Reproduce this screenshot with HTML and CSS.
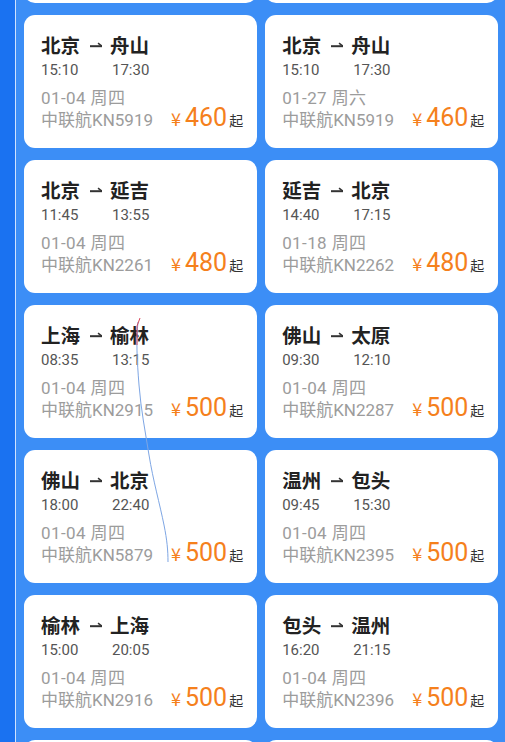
FILE: index.html
```html
<!DOCTYPE html>
<html lang="zh-CN">
<head>
<meta charset="utf-8">
<title>特价机票</title>
<link rel="stylesheet" href="styles.css">
</head>
<body>
<div class="page">
  <div class="strip"></div>
  <main class="main">
    <div class="grid">
      <div class="card"></div>
      <div class="card"></div>

      <div class="card">
        <div class="title"><span>北京</span><svg class="arrow" viewBox="0 0 12 8" width="12" height="8"><path d="M0 5.2H12" /><path d="M8 2.2L12 5.2" /></svg><span>舟山</span></div>
        <div class="times"><span class="dep">15:10</span><span>17:30</span></div>
        <div class="date">01-04 周四</div>
        <div class="bottom"><span class="airline">中联航KN5919</span><span class="price"><span class="yen">¥</span><span class="num">460</span><span class="qi">起</span></span></div>
      </div>
      <div class="card">
        <div class="title"><span>北京</span><svg class="arrow" viewBox="0 0 12 8" width="12" height="8"><path d="M0 5.2H12" /><path d="M8 2.2L12 5.2" /></svg><span>舟山</span></div>
        <div class="times"><span class="dep">15:10</span><span>17:30</span></div>
        <div class="date">01-27 周六</div>
        <div class="bottom"><span class="airline">中联航KN5919</span><span class="price"><span class="yen">¥</span><span class="num">460</span><span class="qi">起</span></span></div>
      </div>

      <div class="card">
        <div class="title"><span>北京</span><svg class="arrow" viewBox="0 0 12 8" width="12" height="8"><path d="M0 5.2H12" /><path d="M8 2.2L12 5.2" /></svg><span>延吉</span></div>
        <div class="times"><span class="dep">11:45</span><span>13:55</span></div>
        <div class="date">01-04 周四</div>
        <div class="bottom"><span class="airline">中联航KN2261</span><span class="price"><span class="yen">¥</span><span class="num">480</span><span class="qi">起</span></span></div>
      </div>
      <div class="card">
        <div class="title"><span>延吉</span><svg class="arrow" viewBox="0 0 12 8" width="12" height="8"><path d="M0 5.2H12" /><path d="M8 2.2L12 5.2" /></svg><span>北京</span></div>
        <div class="times"><span class="dep">14:40</span><span>17:15</span></div>
        <div class="date">01-18 周四</div>
        <div class="bottom"><span class="airline">中联航KN2262</span><span class="price"><span class="yen">¥</span><span class="num">480</span><span class="qi">起</span></span></div>
      </div>

      <div class="card">
        <div class="title"><span>上海</span><svg class="arrow" viewBox="0 0 12 8" width="12" height="8"><path d="M0 5.2H12" /><path d="M8 2.2L12 5.2" /></svg><span>榆林</span></div>
        <div class="times"><span class="dep">08:35</span><span>13:15</span></div>
        <div class="date">01-04 周四</div>
        <div class="bottom"><span class="airline">中联航KN2915</span><span class="price"><span class="yen">¥</span><span class="num">500</span><span class="qi">起</span></span></div>
      </div>
      <div class="card">
        <div class="title"><span>佛山</span><svg class="arrow" viewBox="0 0 12 8" width="12" height="8"><path d="M0 5.2H12" /><path d="M8 2.2L12 5.2" /></svg><span>太原</span></div>
        <div class="times"><span class="dep">09:30</span><span>12:10</span></div>
        <div class="date">01-04 周四</div>
        <div class="bottom"><span class="airline">中联航KN2287</span><span class="price"><span class="yen">¥</span><span class="num">500</span><span class="qi">起</span></span></div>
      </div>

      <div class="card">
        <div class="title"><span>佛山</span><svg class="arrow" viewBox="0 0 12 8" width="12" height="8"><path d="M0 5.2H12" /><path d="M8 2.2L12 5.2" /></svg><span>北京</span></div>
        <div class="times"><span class="dep">18:00</span><span>22:40</span></div>
        <div class="date">01-04 周四</div>
        <div class="bottom"><span class="airline">中联航KN5879</span><span class="price"><span class="yen">¥</span><span class="num">500</span><span class="qi">起</span></span></div>
      </div>
      <div class="card">
        <div class="title"><span>温州</span><svg class="arrow" viewBox="0 0 12 8" width="12" height="8"><path d="M0 5.2H12" /><path d="M8 2.2L12 5.2" /></svg><span>包头</span></div>
        <div class="times"><span class="dep">09:45</span><span>15:30</span></div>
        <div class="date">01-04 周四</div>
        <div class="bottom"><span class="airline">中联航KN2395</span><span class="price"><span class="yen">¥</span><span class="num">500</span><span class="qi">起</span></span></div>
      </div>

      <div class="card">
        <div class="title"><span>榆林</span><svg class="arrow" viewBox="0 0 12 8" width="12" height="8"><path d="M0 5.2H12" /><path d="M8 2.2L12 5.2" /></svg><span>上海</span></div>
        <div class="times"><span class="dep">15:00</span><span>20:05</span></div>
        <div class="date">01-04 周四</div>
        <div class="bottom"><span class="airline">中联航KN2916</span><span class="price"><span class="yen">¥</span><span class="num">500</span><span class="qi">起</span></span></div>
      </div>
      <div class="card">
        <div class="title"><span>包头</span><svg class="arrow" viewBox="0 0 12 8" width="12" height="8"><path d="M0 5.2H12" /><path d="M8 2.2L12 5.2" /></svg><span>温州</span></div>
        <div class="times"><span class="dep">16:20</span><span>21:15</span></div>
        <div class="date">01-04 周四</div>
        <div class="bottom"><span class="airline">中联航KN2396</span><span class="price"><span class="yen">¥</span><span class="num">500</span><span class="qi">起</span></span></div>
      </div>

      <div class="card"></div>
      <div class="card"></div>
    </div>
  </main>
  <svg class="scribble" width="505" height="742" viewBox="0 0 505 742">
    <path class="scribble-blue" d="M138 322 C136 340 137 360 139 385 C141 410 145 430 149 455 C153 480 160 505 164 525 C167 540 168 550 168 562" />
    <path class="scribble-red" d="M140 318 L137 326 L137 345" />
  </svg>
</div>
</body>
</html>
```

FILE: styles.css
```css
html, body {
  margin: 0;
  padding: 0;
}

body {
  width: 505px;
  height: 742px;
  overflow: hidden;
  background: #3c8ef6;
  font-family: Roboto, "Noto Sans CJK SC", sans-serif;
}

.page {
  position: relative;
  display: flex;
  height: 742px;
  overflow: hidden;
}

.strip {
  flex: none;
  width: 15px;
  background: #1a72f1;
  border-right: 1px solid #cfe2ff;
}

.main {
  flex: 1;
  padding: 0 8px;
}

.grid {
  display: grid;
  grid-template-columns: 1fr 1fr;
  grid-auto-rows: 133px;
  column-gap: 8px;
  row-gap: 12px;
  margin-top: -130px;
}

.card {
  background: #ffffff;
  border-radius: 11px;
  padding: 18px 14px 0 17px;
  box-sizing: border-box;
}

.title {
  font-size: 19.5px;
  line-height: 24px;
  font-weight: 700;
  color: #222222;
  white-space: nowrap;
  font-family: "Noto Sans CJK SC", sans-serif;
}

.arrow {
  vertical-align: 4px;
  margin: 0 8px 0 10px;
  fill: none;
  stroke: #333333;
  stroke-width: 2;
}

.arrow path + path {
  stroke-width: 1.5;
}

.times {
  margin-top: 4px;
  font-size: 15px;
  line-height: 18px;
  color: #555555;
  white-space: nowrap;
}

.dep {
  display: inline-block;
  width: 71px;
}

.date {
  margin-top: 8px;
  font-size: 17px;
  line-height: 22px;
  letter-spacing: 0.4px;
  color: #9c9c9c;
  white-space: nowrap;
}

.bottom {
  display: flex;
  align-items: baseline;
  white-space: nowrap;
}

.airline {
  flex: none;
  width: 130px;
  font-size: 17px;
  line-height: 22px;
  color: #9c9c9c;
}

.price {
  display: flex;
  align-items: baseline;
  line-height: 18px;
}

.yen {
  font-size: 18px;
  color: #f5801c;
  margin-right: 4px;
  font-family: "Noto Sans CJK SC", sans-serif;
}

.num {
  font-size: 25px;
  color: #f5801c;
}

.qi {
  font-size: 14px;
  color: #333333;
  margin-left: 2px;
  font-family: "Noto Sans CJK SC", sans-serif;
}

.scribble {
  position: absolute;
  left: 0;
  top: 0;
  pointer-events: none;
  fill: none;
}

.scribble-blue {
  stroke: #7ea6e4;
  stroke-width: 1;
}

.scribble-red {
  stroke: #d8475a;
  stroke-width: 1;
}
```
